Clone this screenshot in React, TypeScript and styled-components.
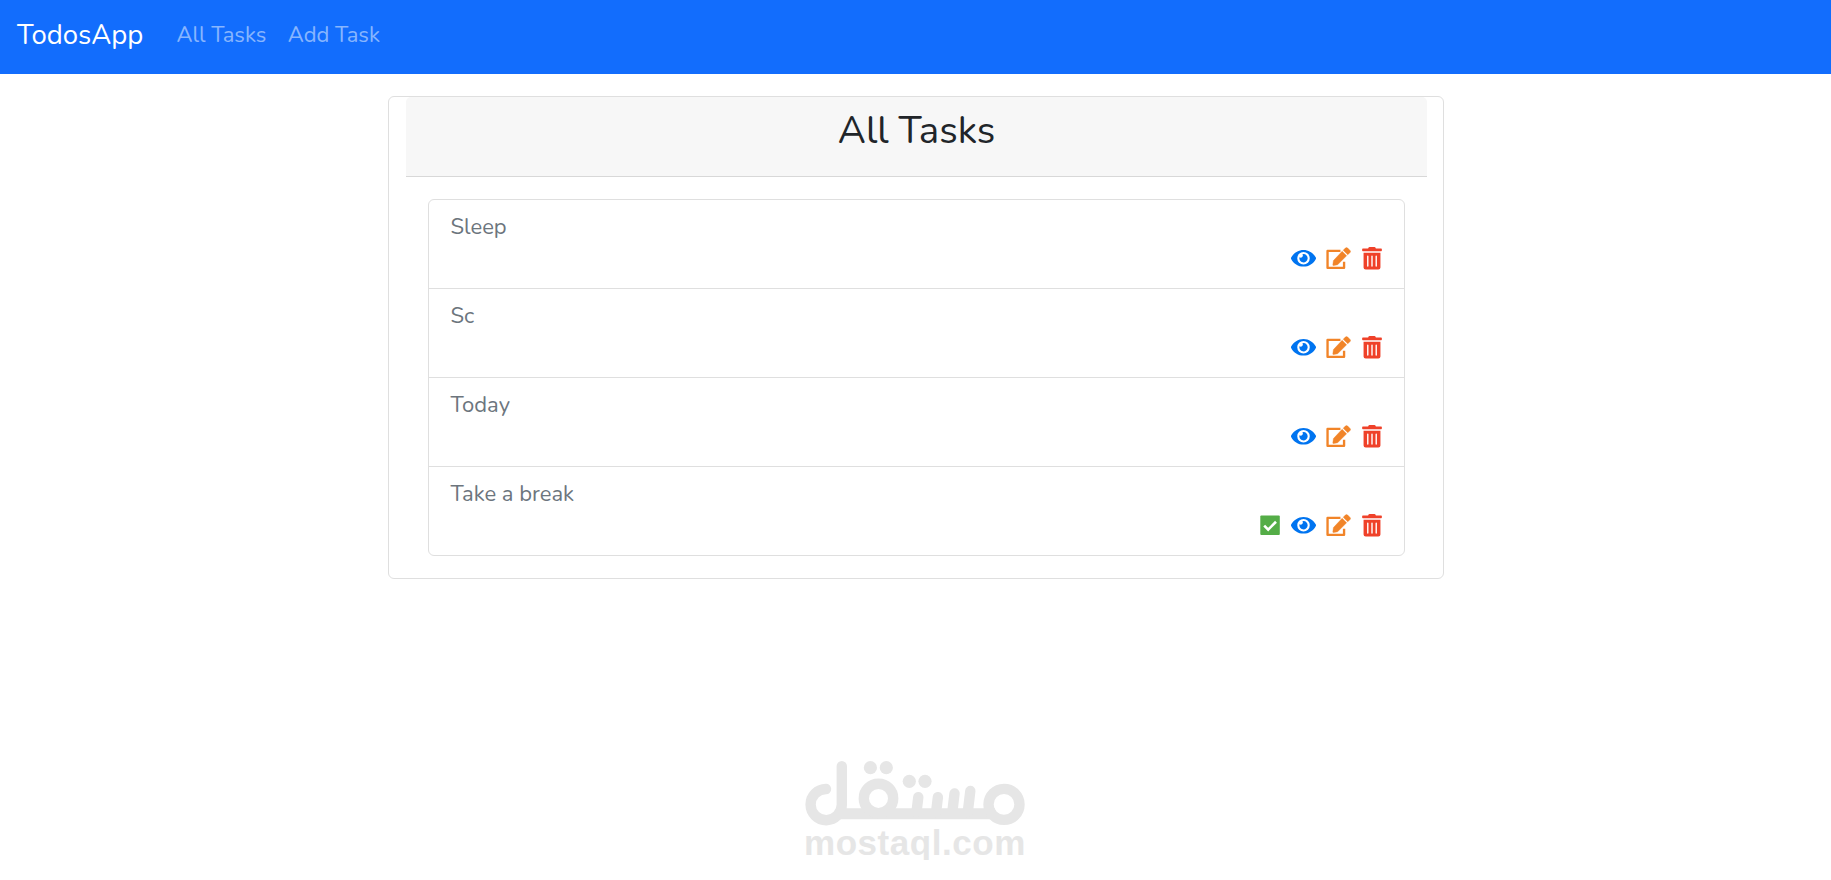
import { createGlobalStyle, styled } from "styled-components";
import { FaEye, FaTrashAlt } from "react-icons/fa";

type Task = { title: string; done?: boolean };

const tasks: Task[] = [
  { title: "Sleep" },
  { title: "Sc" },
  { title: "Today" },
  { title: "Take a break", done: true },
];

const App = () => {
  return (
    <>
      <GlobalStyle />
      <Navbar>
        <Brand href="#">TodosApp</Brand>
        <NavLink href="#">All Tasks</NavLink>
        <NavLink href="#">Add Task</NavLink>
      </Navbar>

      <Card>
        <CardHeader>
          <Title>All Tasks</Title>
        </CardHeader>
        <TaskList>
          {tasks.map((task) => (
            <TaskItem key={task.title}>
              <TaskName>{task.title}</TaskName>
              <Actions>
                {task.done && (
                  <Action $color="#54ad47" $width={20}>
                    <CheckIcon />
                  </Action>
                )}
                <Action $color="#0074f0" $width={25}>
                  <FaEye />
                </Action>
                <Action $color="#f18428" $width={25}>
                  <EditIcon />
                </Action>
                <Action $color="#ef4129" $width={20}>
                  <FaTrashAlt />
                </Action>
              </Actions>
            </TaskItem>
          ))}
        </TaskList>
      </Card>

      <Watermark>
        <WatermarkLogo />
        <WatermarkText>mostaql.com</WatermarkText>
      </Watermark>
    </>
  );
};

export default App;

const CheckIcon = () => (
  <svg viewBox="0 0 20 22">
    <rect x="0.3" y="1.2" width="19.5" height="19.5" rx="1" fill="currentColor" />
    <path d="M4.2 11.3l4 4L16 7.500" fill="none" stroke="#fff" strokeWidth="2.6" />
  </svg>
);

const EditIcon = () => (
  <svg viewBox="0 0 25 23">
    <path
      d="M14.500 4H1.300V21.300H18.200V15"
      fill="none"
      stroke="currentColor"
      strokeWidth="2.400"
      strokeLinejoin="round"
    />
    <path
      d="M16.200 4.400l4.600 4.600-9.200 9.200-4 .8q-1 .1-.9-.9l.6-4.200zM17.300 3.300l2.200-2.200q1.200-1.100 2.400 0l2.400 2.400q1.100 1.100 0 2.200l-2.300 2.300z"
      fill="currentColor"
      stroke="currentColor"
      strokeWidth="0.4"
    />
  </svg>
);

const WatermarkLogo = () => (
  <svg width="222" height="66" viewBox="0 0 222 66" fill="none">
    <g stroke="#e6e6e6" strokeWidth="10.4" strokeLinecap="round">
      <path d="M22 28a15.600 15.600 0 1 0 15.800 15.400V5.200" />
      <path d="M33 52.700H191" strokeLinecap="butt" strokeWidth="11" />
      <circle cx="74.5" cy="37.4" r="14.7" />
      <circle cx="200" cy="43.4" r="15.5" />
      <path d="M114.300 36.200l-1.800 15M133.900 36.200l-1.800 15M150.500 32.500l-2.200 19M166.300 30l-2.500 21" />
    </g>
    <g fill="#e6e6e6">
      <circle cx="66.4" cy="6.7" r="6.6" />
      <circle cx="82.3" cy="6.7" r="6.6" />
      <circle cx="105.3" cy="20.3" r="6.6" />
      <circle cx="121" cy="20.3" r="6.6" />
    </g>
  </svg>
);

const GlobalStyle = createGlobalStyle`
  * {
    box-sizing: border-box;
  }

  body {
    margin: 0;
    background: #fff;
    color: #212529;
    font-family: Nunito, Lato, sans-serif;
    font-size: 22px;
    line-height: 33px;
  }
`;

const Navbar = styled.nav`
  display: flex;
  height: 74px;
  padding: 0 17px 4px;
  align-items: center;
  background: #126dfd;
`;

const Brand = styled.a`
  margin-right: 33px;
  color: #fff;
  font-size: 27.5px;
  text-decoration: none;
`;

const NavLink = styled.a`
  margin-right: 21.5px;
  color: rgba(255, 255, 255, 0.5);
  text-decoration: none;
`;

const Card = styled.main`
  width: 1056px;
  margin: 22px 0 0 388px;
  padding: 0 16px 22px 17px;
  border: 1px solid #dfdfdf;
  border-radius: 6px;
`;

const CardHeader = styled.header`
  height: 80px;
  padding-top: 11px;
  border-bottom: 1px solid #d8d8d8;
  border-radius: 5px 5px 0 0;
  background: #f7f7f7;
  text-align: center;
`;

const Title = styled.h1`
  margin: 0;
  font-size: 38.5px;
  font-weight: 400;
  line-height: 45px;
`;

const TaskList = styled.ul`
  margin: 22px 22px 0;
  padding: 0;
  border: 1px solid #dfdfdf;
  border-radius: 6px;
  list-style: none;
`;

const TaskItem = styled.li`
  height: 89px;
  padding: 11px 22px 11px 21.5px;

  &:first-child {
    height: 88px;
  }

  & + & {
    border-top: 1px solid #dfdfdf;
  }
`;

const TaskName = styled.div`
  color: #6c757d;
`;

const Actions = styled.div`
  display: flex;
  height: 29px;
  justify-content: flex-end;
  align-items: center;
  gap: 10.6px;
`;

const Action = styled.span<{ $color: string; $width: number }>`
  display: flex;
  width: ${({ $width }) => $width}px;
  color: ${({ $color }) => $color};

  svg {
    width: 100%;
    height: 22.5px;
  }
`;

const Watermark = styled.footer`
  display: flex;
  width: 222px;
  margin: 182px 0 0 804px;
  flex-direction: column;
`;

const WatermarkText = styled.span`
  margin-top: -1px;
  color: #e6e6e6;
  font-family: "Liberation Sans", sans-serif;
  font-size: 35px;
  font-weight: 700;
  letter-spacing: 0.55px;
  line-height: 34px;
`;
